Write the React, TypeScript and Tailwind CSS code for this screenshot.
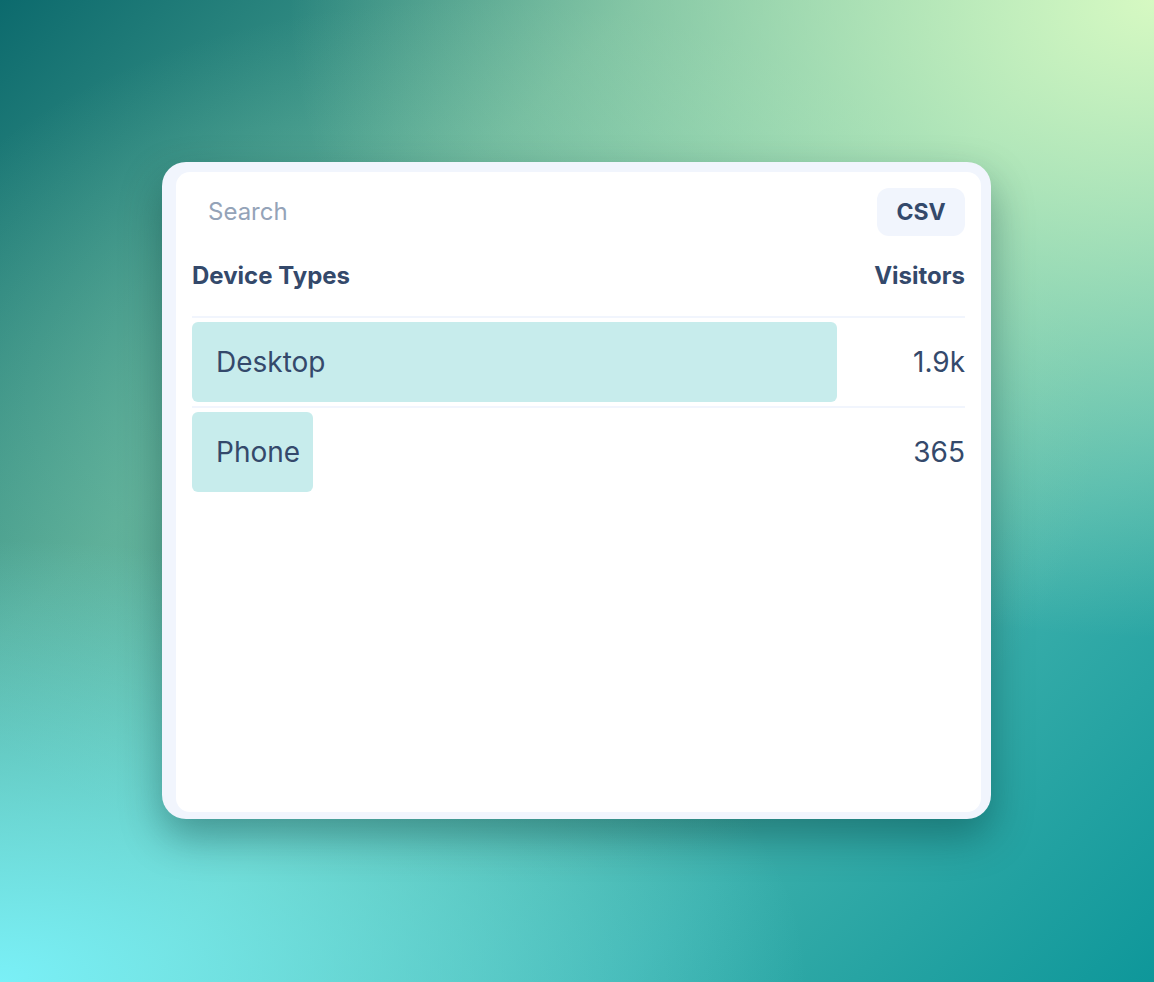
const rows = [
  { name: "Desktop", value: "1.9k", width: 645 },
  { name: "Phone", value: "365", width: 121 },
];

export default function App() {
  return (
    <div
      className="w-[1154px] h-[982px] flex items-start justify-start bg-[radial-gradient(ellipse_75%_65%_at_100%_0%,#d6f9c2_0%,rgba(214,249,194,0)_100%),radial-gradient(ellipse_70%_45%_at_0%_100%,#7af0f7_0%,rgba(122,240,247,0)_100%),radial-gradient(ellipse_55%_45%_at_40%_45%,rgba(150,215,180,0.55)_0%,rgba(150,215,180,0)_100%),linear-gradient(135deg,#0c6a6d_0%,#4fa592_30%,#5fbca6_52%,#3aaeaa_75%,#0e979a_100%)]"
      style={{ fontFamily: "Inter, 'Noto Sans', sans-serif" }}
    >
      <div className="mt-[162px] ml-[162px] w-[829px] h-[657px] rounded-[24px] bg-[#f1f5fd] pl-[14px] pr-[10px] pt-[10px] pb-[7px] shadow-[0_18px_40px_rgba(0,50,50,0.4)]">
        <div className="h-full w-full rounded-[14px] bg-white px-4 pt-4">
          <div className="flex items-center justify-between h-12">
            <input
              placeholder="Search"
              className="flex-1 px-4 text-[24px] text-[#34496b] placeholder:text-[#94a3b8] outline-none bg-transparent"
            />
            <button className="h-12 w-[88px] rounded-xl bg-[#f1f5fd] text-[23px] font-bold text-[#34496b]">
              CSV
            </button>
          </div>
          <div className="flex items-center justify-between h-20 text-[24px] font-bold text-[#34496b]">
            <span>Device Types</span>
            <span>Visitors</span>
          </div>
          {rows.map((r) => (
            <div key={r.name} className="flex items-center justify-between border-t-2 border-[#f1f5fd] py-1">
              <div
                className="h-20 rounded-md bg-[#c7ecec] flex items-center px-6 text-[28px] text-[#34496b] whitespace-nowrap"
                style={{ width: `${r.width}px` }}
              >
                {r.name}
              </div>
              <span className="text-[28px] text-[#34496b]">{r.value}</span>
            </div>
          ))}
        </div>
      </div>
    </div>
  );
}
